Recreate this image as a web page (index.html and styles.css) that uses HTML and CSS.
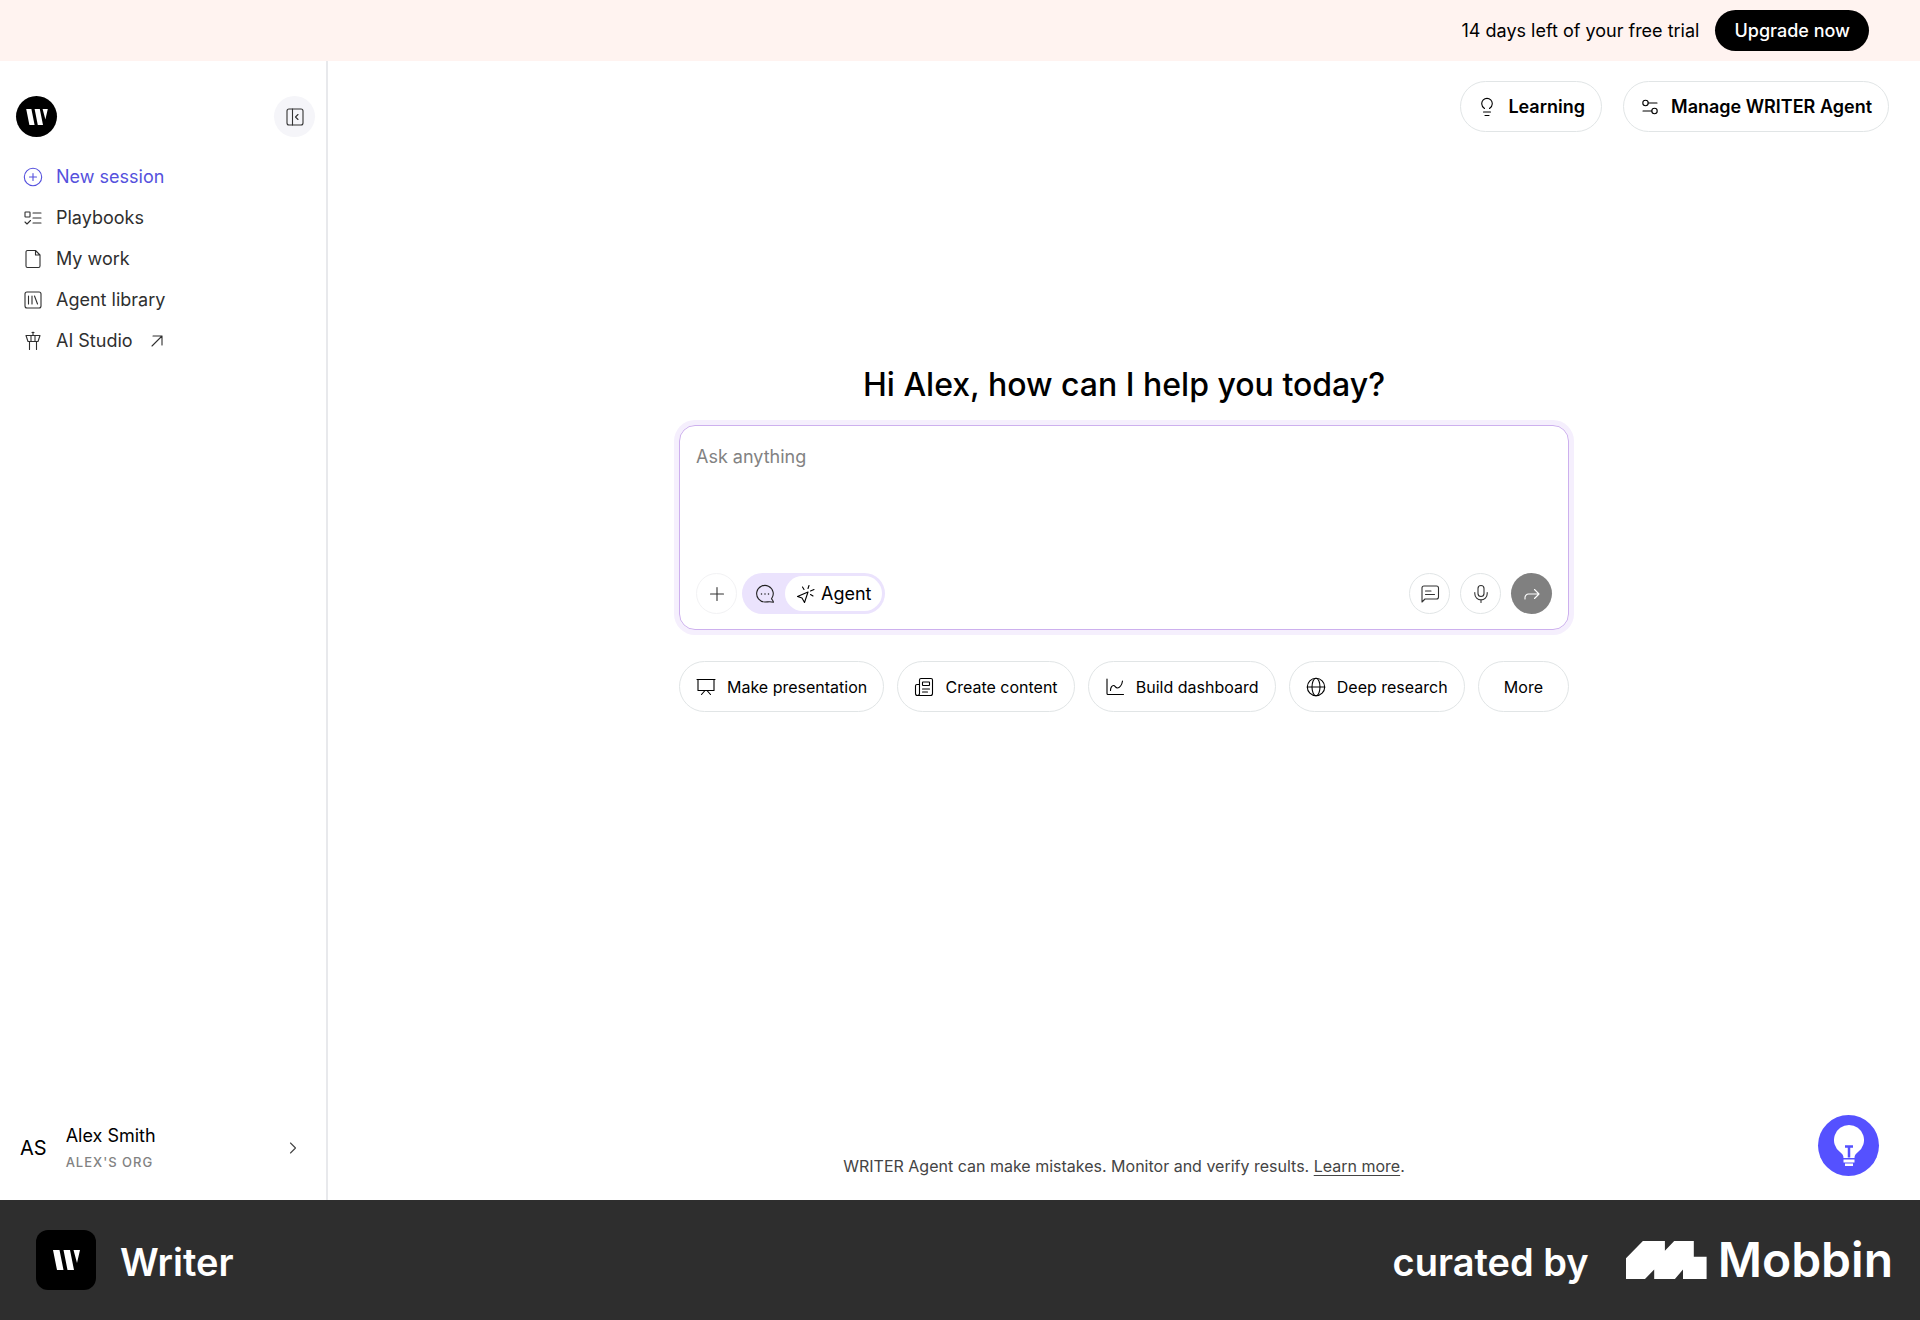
FILE: index.html
```html
<!DOCTYPE html>
<html lang="en">
<head>
    <meta charset="UTF-8">
    <meta name="viewport" content="width=device-width, initial-scale=1">
    <title>WRITER Agent</title>
    <link rel="stylesheet" href="styles.css">
</head>
<body>
    <div class="trial-banner">
        <span>14 days left of your free trial</span>
        <button class="upgrade">Upgrade now</button>
    </div>

    <div class="app">
        <aside class="sidebar">
            <div class="sidebar-top">
                <a href="#" class="logo" aria-label="Writer">
                    <svg width="22" height="16" viewBox="0 0 27 20"><path d="M0 0h6.500l4 20H4zM10.500 0H17l4 20h-6.500zM20.500 0H27l-3 13z"/></svg>
                </a>
                <button class="collapse" aria-label="Collapse sidebar">
                    <svg class="icon" width="20" height="20" viewBox="0 0 20 20"><rect x="2" y="2" width="16" height="16" rx="2"/><path d="M7.500 2v16M13 7.500 10.500 10l2.500 2.500"/></svg>
                </button>
            </div>
            <nav class="nav">
                <a href="#" class="active">
                    <svg class="icon" width="20" height="20" viewBox="0 0 20 20"><circle cx="10" cy="10" r="8.700"/><path d="M10 6.500v7M6.500 10h7"/></svg>
                    New session
                </a>
                <a href="#">
                    <svg class="icon" width="20" height="20" viewBox="0 0 20 20"><rect x="2" y="4" width="5" height="5" rx=".5"/><path d="M10 5h8M10 10h8M10 15h8M2 14l2 2 3.500-3.500"/></svg>
                    Playbooks
                </a>
                <a href="#">
                    <svg class="icon" width="20" height="20" viewBox="0 0 20 20"><path d="M12.500 1.500H4.500a1.500 1.500 0 0 0-1.500 1.500v14a1.500 1.500 0 0 0 1.500 1.500h11a1.500 1.500 0 0 0 1.500-1.500V6zM12.500 1.500V6H17"/></svg>
                    My work
                </a>
                <a href="#">
                    <svg class="icon" width="20" height="20" viewBox="0 0 20 20"><rect x="2" y="2" width="16" height="16" rx="2"/><path d="M5.500 6v8M9 6v8M11.500 6l3 8"/></svg>
                    Agent library
                </a>
                <a href="#">
                    <svg class="icon" width="20" height="20" viewBox="0 0 20 20"><path d="M10 1v3.500M3 4.500h14l-2 6H5zM8 4.500v6M12 4.500v6M6.500 10.500v8M13.500 10.500v8M9 1.500h2"/></svg>
                    AI Studio
                    <svg class="icon external" width="14" height="14" viewBox="0 0 14 14"><path d="M2 12 12 2M3 2h9v9"/></svg>
                </a>
            </nav>
            <button class="user">
                <span class="initials">AS</span>
                <span class="user-info">
                    <span class="user-name">Alex Smith</span>
                    <span class="user-org">ALEX'S ORG</span>
                </span>
                <svg class="icon" width="20" height="20" viewBox="0 0 20 20"><path d="m7.500 5 5 5-5 5"/></svg>
            </button>
        </aside>

        <main class="main">
            <div class="toolbar">
                <button class="pill strong">
                    <svg class="icon" width="20" height="20" viewBox="0 0 20 20"><path d="M7.500 11.500C5.500 10 4.700 8.500 4.700 6.700a5.300 5.300 0 0 1 10.600 0c0 1.800-.800 3.300-2.800 4.800M6.500 15h7M8 18.500h4"/></svg>
                    Learning
                </button>
                <button class="pill strong">
                    <svg class="icon" width="20" height="20" viewBox="0 0 20 20"><circle cx="5.500" cy="6" r="2.700"/><circle cx="14.500" cy="14" r="2.700"/><path d="M8.200 6H17M3 14h8.800"/></svg>
                    Manage WRITER Agent
                </button>
            </div>

            <section class="hero">
                <h1>Hi Alex, how can I help you today?</h1>
                <div class="composer">
                    <textarea placeholder="Ask anything" aria-label="Ask anything"></textarea>
                    <div class="composer-actions">
                        <button class="round faint" aria-label="Add">
                            <svg class="icon" width="20" height="20" viewBox="0 0 20 20"><path d="M10 3.500v13M3.500 10h13"/></svg>
                        </button>
                        <div class="mode">
                            <button class="chat" aria-label="Chat">
                                <svg class="icon" width="20" height="20" viewBox="0 0 20 20"><path d="M16.500 14.800A8.300 8.300 0 1 0 10 18c3 0 4.500-.800 8.500 0.200-.400-1.200-.900-2.400-2-3.400z"/><path class="dots" d="M6.500 10h0M10 10h0M13.500 10h0"/></svg>
                            </button>
                            <button class="agent">
                                <svg class="icon" width="20" height="20" viewBox="0 0 20 20"><path d="M12 8 1.500 12.500l4.500 1.500 2.500 4.500zM8 5.500 6.500 3M12 4.500l1-3M14.500 7l3.500-1.500M14.500 10.500l2.500 1.500"/></svg>
                                Agent
                            </button>
                        </div>
                        <button class="round push" aria-label="Prompts">
                            <svg class="icon" width="20" height="20" viewBox="0 0 20 20"><path d="M2 18V4a2 2 0 0 1 2-2h12.500a2 2 0 0 1 2 2v9a2 2 0 0 1-2 2H5zM5.500 7h5.500M5.500 10.500h9"/></svg>
                        </button>
                        <button class="round" aria-label="Dictate">
                            <svg class="icon" width="20" height="20" viewBox="0 0 20 20"><rect x="7" y="1.500" width="6" height="11" rx="3"/><path d="M3.800 8.500v1.200a6.200 6.200 0 0 0 12.400 0V8.500M10 16v2.500"/></svg>
                        </button>
                        <button class="round send" aria-label="Send">
                            <svg class="icon" width="20" height="20" viewBox="0 0 20 20"><path d="M3 15v-1.500A3.500 3.500 0 0 1 6.500 10H17M12.500 5.500 17 10l-4.500 4.500"/></svg>
                        </button>
                    </div>
                </div>
                <div class="suggestions">
                    <button class="pill">
                        <svg class="icon" width="20" height="20" viewBox="0 0 20 20"><path d="M1 2.500h18M2 2.500v11h16v-11M9 13.500 5.500 17.500M11 13.500l3.500 4"/></svg>
                        Make presentation
                    </button>
                    <button class="pill">
                        <svg class="icon" width="20" height="20" viewBox="0 0 20 20"><path d="M5 7.500H3A1.500 1.500 0 0 0 1.500 9v7.500a2 2 0 0 0 4 0V3A1.500 1.500 0 0 1 7 1.500h10A1.500 1.500 0 0 1 18.500 3v13.500a2 2 0 0 1-2 2h-13"/><rect x="8.500" y="5" width="7" height="3.500" rx=".5"/><path d="M8.500 12h7M8.500 15h5"/></svg>
                        Create content
                    </button>
                    <button class="pill">
                        <svg class="icon" width="20" height="20" viewBox="0 0 20 20"><path d="M2 2v14.500a1 1 0 0 0 1 1h15.500M5.500 13.500c0-3 1.500-5 3-5 2 0 1.500 2.500 4 2.500 2 0 4.500-3 5-7"/></svg>
                        Build dashboard
                    </button>
                    <button class="pill">
                        <svg class="icon" width="20" height="20" viewBox="0 0 20 20"><circle cx="10" cy="10" r="8.700"/><ellipse cx="10" cy="10" rx="4" ry="8.700"/><path d="M1.300 10h17.400"/></svg>
                        Deep research
                    </button>
                    <button class="pill more">More</button>
                </div>
            </section>

            <p class="note">WRITER Agent can make mistakes. Monitor and verify results. <a href="#">Learn more</a>.</p>

            <button class="help" aria-label="Help">
                <svg width="30" height="42" viewBox="0 0 30 42"><path fill="#fff" d="M15 0A15 15 0 0 0 6 27c2.500 2 3.500 3.500 3.500 6h11c0-2.500 1-4 3.500-6A15 15 0 0 0 15 0zM9.500 34.500h11v3h-11zM11 38.500h8V41h-8z"/><path class="filament" d="M11 21.500h8M15 21.500v11"/></svg>
            </button>
        </main>
    </div>

    <footer class="credits">
        <span class="tile">
            <svg width="27" height="20" viewBox="0 0 27 20"><path d="M0 0h6.500l4 20H4zM10.500 0H17l4 20h-6.500zM20.500 0H27l-3 13z"/></svg>
        </span>
        <span class="credit-text">Writer</span>
        <span class="credit-text curated">curated by</span>
        <a href="#" class="mobbin">
            <svg width="81" height="38" viewBox="0 0 81 38"><path d="M0 17.300 16.900 0h22v9.700L48.200 0h19.600v15.700h12.800V38H57v-9.500L48.900 38H28.200v-9.500L19 38H0z"/></svg>
            Mobbin
        </a>
    </footer>
</body>
</html>
```

FILE: styles.css
```css
* {
    box-sizing: border-box;
}
body {
    margin: 0;
    min-height: 100vh;
    display: flex;
    flex-direction: column;
    font-family: Inter, "Liberation Sans", sans-serif;
    font-size: 18px;
    line-height: 28px;
    color: #000;
    background-color: #fff;
}
button {
    font: inherit;
    color: inherit;
    background: none;
    border: none;
    padding: 0;
    white-space: nowrap;
    cursor: pointer;
}
svg {
    flex: none;
    display: block;
    fill: #fff;
}
.icon {
    fill: none;
    stroke: currentColor;
    stroke-width: 1.1;
    stroke-linecap: round;
    stroke-linejoin: round;
}

/* trial banner */
.trial-banner {
    display: flex;
    align-items: center;
    justify-content: flex-end;
    gap: 16px;
    height: 61px;
    padding-right: 51px;
    background-color: #fff3f0;
}
.upgrade {
    height: 41px;
    padding: 0 19px;
    border-radius: 21px;
    background-color: #000;
    color: #fff;
    font-weight: 500;
}

.app {
    flex: 1;
    display: flex;
}

/* sidebar */
.sidebar {
    width: 328px;
    flex: none;
    display: flex;
    flex-direction: column;
    padding: 35px 11px 26px 16px;
    border-right: 2px solid #e8e9ec;
}
.sidebar-top {
    display: flex;
    justify-content: space-between;
    margin-bottom: 19px;
}
.logo, .collapse {
    display: flex;
    align-items: center;
    justify-content: center;
    width: 41px;
    height: 41px;
    border-radius: 50%;
}
.logo {
    background-color: #000;
}
.collapse {
    background-color: #f5f5f9;
    color: #333;
}
.nav a {
    display: flex;
    align-items: center;
    gap: 13px;
    height: 41px;
    padding-left: 7px;
    color: #2f2f2f;
    text-decoration: none;
}
.nav .active {
    color: #5551dd;
}
.nav .external {
    margin-left: 4px;
}
.user {
    display: flex;
    align-items: center;
    gap: 19px;
    margin-top: auto;
    padding: 0 12px 0 4px;
    text-align: left;
}
.user .icon {
    color: #444;
}
.initials {
    font-size: 20px;
}
.user-info {
    flex: 1;
    display: flex;
    flex-direction: column;
}
.user-org {
    font-size: 13px;
    font-weight: 500;
    line-height: 24px;
    letter-spacing: 1px;
    color: #828282;
}

/* main area */
.main {
    flex: 1;
    display: flex;
    flex-direction: column;
    position: relative;
}
.toolbar {
    display: flex;
    justify-content: flex-end;
    gap: 21px;
    padding: 20px 31px 0;
}
.pill {
    display: flex;
    align-items: center;
    justify-content: center;
    gap: 11px;
    height: 51px;
    padding: 0 16px;
    border: 1px solid #e1e5e6;
    border-radius: 26px;
    font-size: 16px;
}
.strong {
    font-size: 18px;
    font-weight: 600;
}
.hero {
    width: 890px;
    max-width: 100%;
    margin: 229px auto 0;
}
h1 {
    margin: 0 0 16px;
    font-size: 32px;
    font-weight: 500;
    line-height: 48px;
    text-align: center;
}
.composer {
    padding: 17px 16px 15px;
    border: 1px solid #cdb0ee;
    border-radius: 16px;
    box-shadow: 0 0 0 5px #f5effd;
}
textarea {
    display: block;
    width: 100%;
    height: 130px;
    padding: 0;
    border: none;
    outline: none;
    resize: none;
    font: inherit;
    background: none;
}
textarea::placeholder {
    color: #828282;
}
.composer-actions {
    display: flex;
    align-items: center;
    gap: 10px;
}
.round {
    display: flex;
    align-items: center;
    justify-content: center;
    width: 41px;
    height: 41px;
    border: 1px solid #e1e5e6;
    border-radius: 50%;
    color: #333;
}
.faint {
    border-color: #f2f2f4;
    margin-right: -5px;
}
.push {
    margin-left: auto;
}
.send {
    border: none;
    background-color: #808080;
    color: #fff;
}
.mode {
    display: flex;
    height: 41px;
    padding: 3px;
    border-radius: 21px;
    background-color: #ebe3fd;
}
.chat {
    padding: 0 10px;
    color: #222;
}
.dots {
    stroke-width: 1.5;
}
.agent {
    display: flex;
    align-items: center;
    gap: 5px;
    padding: 0 11px;
    border-radius: 18px;
    background-color: #fff;
}
.suggestions {
    display: flex;
    justify-content: space-between;
    margin-top: 31px;
}
.more {
    padding: 0 25px;
}
.note {
    margin: auto 0 0;
    padding-bottom: 22px;
    font-size: 16px;
    line-height: 24px;
    text-align: center;
    color: #444;
}
.note a {
    color: inherit;
    text-underline-offset: 3px;
}
.help {
    position: absolute;
    right: 41px;
    bottom: 24px;
    display: flex;
    align-items: center;
    justify-content: center;
    width: 61px;
    height: 61px;
    border-radius: 50%;
    background-color: #5551ff;
}
.filament {
    fill: none;
    stroke: #5551ff;
    stroke-width: 2.5;
}

/* bottom bar */
.credits {
    display: flex;
    align-items: center;
    height: 120px;
    padding: 0 27px 0 36px;
    background-color: #2e2e2e;
    color: #fff;
}
.tile {
    display: flex;
    align-items: center;
    justify-content: center;
    width: 60px;
    height: 60px;
    margin-right: 24px;
    border-radius: 12px;
    background-color: #000;
}
.credit-text {
    padding-top: 4px;
    font-size: 38px;
    font-weight: 600;
    line-height: 48px;
}
.curated {
    margin-left: auto;
    margin-right: 37px;
}
.mobbin {
    display: flex;
    align-items: center;
    gap: 11px;
    color: inherit;
    font-size: 48px;
    font-weight: 600;
    line-height: 60px;
    text-decoration: none;
}
```
